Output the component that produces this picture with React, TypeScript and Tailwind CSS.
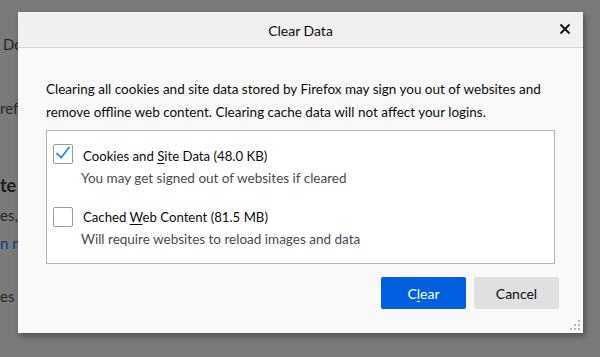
import React from "react";

function Check() {
  return (
    <svg width="20" height="20" viewBox="0 0 20 20" className="block">
      <path d="M3.5 9.5 L8 14 L16.5 3" fill="none" stroke="#2a8de4" strokeWidth="2" strokeLinecap="square" strokeLinejoin="miter" />
    </svg>
  );
}

function Grip() {
  const dots = [
    [8, 0],
    [4, 4],
    [8, 4],
    [0, 8],
    [4, 8],
    [8, 8],
  ];
  return (
    <svg width="10" height="10" viewBox="0 0 10 10" className="block">
      {dots.map(([x, y], i) => (
        <rect key={i} x={x} y={y} width="2" height="2" fill="#b8b8b8" />
      ))}
    </svg>
  );
}

export default function App() {
  return (
    <div
      className="relative w-[600px] h-[357px] overflow-hidden bg-[#7a7a7a] text-[#262626]"
      style={{ fontFamily: 'Lato, "Noto Sans", sans-serif' }}
    >
      {/* background page */}
      <div className="flex flex-col text-[15px] leading-5">
        <div className="mt-[34px] pl-[3px] whitespace-nowrap">Dow</div>
        <div className="mt-[44px] pl-[0px] whitespace-nowrap">refer</div>
        <div className="mt-[56px] pl-[0px] h-[22px] text-[18px] font-bold leading-[22px] text-[#1c1c1c] whitespace-nowrap">te</div>
        <div className="mt-[9px] pl-[0px] whitespace-nowrap">es, a</div>
        <div className="mt-[8px] pl-[0px] text-[#0b3a78] whitespace-nowrap">n mo</div>
        <div className="mt-[33px] pl-[0px] whitespace-nowrap">es an</div>
      </div>

      {/* dialog */}
      <div className="absolute left-[18px] top-[12px] w-[565px] h-[321px] flex flex-col bg-[#f9f9f9] shadow-[2px_3px_6px_rgba(0,0,0,0.35)]">
        <div className="relative shrink-0 h-[36px] flex items-center justify-center bg-[#f0f0f0] border-b border-[#d4d4d4]">
          <span className="text-[14px] text-[#0c0c0d] mt-[1px]">Clear Data</span>
          <span className="absolute right-[12px] top-[11px]">
            <svg width="12" height="12" viewBox="0 0 12 12" className="block">
              <path d="M1.5 1.5 L10.5 10.5 M10.5 1.5 L1.5 10.5" stroke="#0c0c0d" strokeWidth="1.8" />
            </svg>
          </span>
        </div>

        <div className="flex flex-col px-[28px] pt-[30px] text-[#0c0c0d]">
          <p className="text-[13.5px] leading-[23px] whitespace-nowrap">
            Clearing all cookies and site data stored by Firefox may sign you out of websites and
            <br />
            remove offline web content. Clearing cache data will not affect your logins.
          </p>

          <div className="mt-[6px] w-[509px] border border-[#b1b1b3] bg-white pl-[6px] pt-[13px] pb-[12px] flex flex-col">
            <div className="flex items-start">
              <div className="w-[20px] h-[20px] border border-[#9a9a9e] rounded-[2px] bg-white flex items-center justify-center">
                <Check />
              </div>
              <div className="ml-[10px] flex flex-col">
                <span className="text-[13.2px] leading-[22px] mt-[1px]">
                  Cookies and <span className="underline underline-offset-2">S</span>ite Data (48.0 KB)
                </span>
                <span className="text-[13.5px] leading-[23px] -ml-[2px] text-[#4a4a4f]">
                  You may get signed out of websites if cleared
                </span>
              </div>
            </div>
            <div className="flex items-start mt-[17px]">
              <div className="w-[20px] h-[20px] border border-[#9a9a9e] rounded-[2px] bg-white" />
              <div className="ml-[10px] flex flex-col">
                <span className="text-[13.2px] leading-[22px] -mt-[1px]">
                  Cached <span className="underline underline-offset-2">W</span>eb Content (81.5 MB)
                </span>
                <span className="text-[13.5px] leading-[23px] -ml-[2px] text-[#4a4a4f]">
                  Will require websites to reload images and data
                </span>
              </div>
            </div>
          </div>

          <div className="mt-[13px] flex justify-end gap-[8px] -mr-[4px]">
            <button className="w-[85px] h-[32px] rounded-[2px] bg-[#0060df] text-white text-[14px]">
              C<span className="underline underline-offset-2">l</span>ear
            </button>
            <button className="w-[85px] h-[32px] rounded-[2px] bg-[#e0e0e1] text-[#0c0c0d] text-[14px]">
              Cancel
            </button>
          </div>
        </div>

        <div className="absolute right-[3px] bottom-[3px]">
          <Grip />
        </div>
      </div>
    </div>
  );
}
